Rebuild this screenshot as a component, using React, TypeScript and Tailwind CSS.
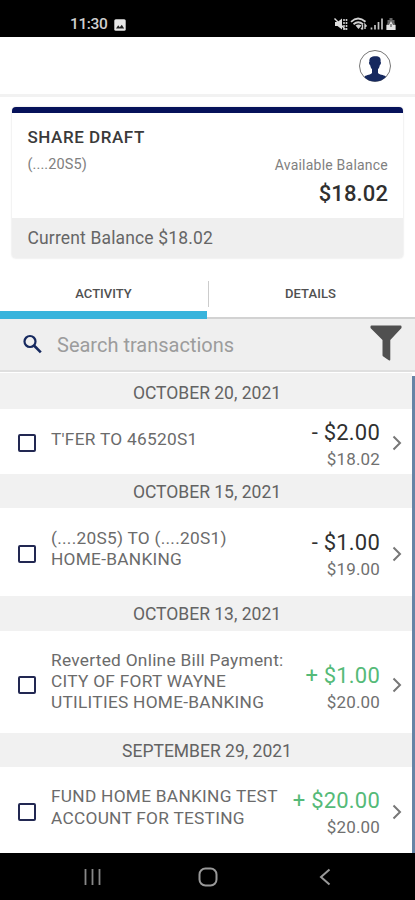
import React from "react";

interface Transaction {
  date: string;
  lines: string[];
  amount: string;
  balance: string;
  credit?: boolean;
  headerClass: string;
  rowClass: string;
  textClass: string;
  amountClass: string;
}

const transactions: Transaction[] = [
  {
    date: "OCTOBER 20, 2021",
    lines: ["T'FER TO 46520S1"],
    amount: "- $2.00",
    balance: "$18.02",
    headerClass: "h-9 pt-[5px]",
    rowClass: "h-[65px]",
    textClass: "pb-[3px]",
    amountClass: "pt-[10px]",
  },
  {
    date: "OCTOBER 15, 2021",
    lines: ["(....20S5) TO (....20S1)", "HOME-BANKING"],
    amount: "- $1.00",
    balance: "$19.00",
    headerClass: "h-[34px] pt-[2px]",
    rowClass: "h-[88px]",
    textClass: "pb-[6px]",
    amountClass: "pt-[8px]",
  },
  {
    date: "OCTOBER 13, 2021",
    lines: [
      "Reverted Online Bill Payment:",
      "CITY OF FORT WAYNE",
      "UTILITIES HOME-BANKING",
    ],
    amount: "+ $1.00",
    balance: "$20.00",
    credit: true,
    headerClass: "h-[35px] pt-[2px]",
    rowClass: "h-[102px] pt-[2px]",
    textClass: "pb-[3px]",
    amountClass: "pt-[12px]",
  },
  {
    date: "SEPTEMBER 29, 2021",
    lines: ["FUND HOME BANKING TEST", "ACCOUNT FOR TESTING"],
    amount: "+ $20.00",
    balance: "$20.00",
    credit: true,
    headerClass: "h-[34px] pt-[2px]",
    rowClass: "h-[86px]",
    textClass: "pb-[5px]",
    amountClass: "pt-[8px]",
  },
];

function StatusBar() {
  return (
    <div className="flex h-[37px] shrink-0 items-end justify-between bg-black pb-[5px] pl-[70px] pr-[18px] text-[#cfcfcf]">
      <div className="flex items-center gap-[7px]">
        <span className="text-[15.5px] font-medium leading-[15px] tracking-[-0.4px]">
          11:30
        </span>
        <svg width="12" height="12" viewBox="0 0 12 12">
          <rect x="0.3" y="0.3" width="11.4" height="11.4" rx="1.5" fill="#e8e8e8" />
          <path d="M2 9.5 4.2 6.3l1.6 2 2-2.6L10.2 9.5Z" fill="#222" />
        </svg>
      </div>
      <svg width="63" height="15" viewBox="0 0 63 15" fill="none">
        {/* muted, vibrate */}
        <path d="M1 5h2.5L8 1.5v11L3.5 9H1Z" fill="#dedede" />
        <path d="m.5 1.5 11 11" stroke="#dedede" strokeWidth="1.5" />
        <path
          d="M10 2v11M12.5 2v11"
          stroke="#c8c8c8"
          strokeWidth="1.6"
          strokeDasharray="2 1"
        />
        {/* wifi */}
        <path d="M17 4.8q7-6.5 14.5 0M19.5 7.2q4.7-4 9.5 0" stroke="#d0d0d0" strokeWidth="1.8" />
        <path d="M21.5 8.5q3-2 6 0L24.5 12Z" fill="#d0d0d0" />
        <path d="M28.5 7.5v5m-1.5-1.5 1.5 1.5M31 12V7.5L32.500 9.500" stroke="#d0d0d0" strokeWidth="1.4" />
        {/* signal */}
        <path d="M37.5 12.5v-2M41 12.5V8M44.5 12.5V5M48 12.5V1.5" stroke="#c4c4c4" strokeWidth="1.7" />
        {/* battery */}
        <path d="M55.5 1h3v2h2v3l1 2v5h-9V8l1-2V3h2Z" fill="#666" />
        <path d="M52.5 8H55l2-4 2 4h2.500v5h-9Z" fill="#e4e4e4" />
        <path d="M57 7v3" stroke="#444" />
      </svg>
    </div>
  );
}

function Header() {
  return (
    <div className="flex h-[60px] shrink-0 justify-end border-b-[3px] border-[#f2f2f2] bg-white pr-[23px] pt-[12px]">
      <svg width="34" height="34" viewBox="0 0 34 34">
        <defs>
          <clipPath id="avatar">
            <circle cx="17" cy="17" r="15.5" />
          </clipPath>
        </defs>
        <circle cx="17" cy="17" r="15.5" fill="#fff" stroke="#777" strokeWidth="1" />
        <path
          clipPath="url(#avatar)"
          d="M17.5 7.3c4 0 5.6 1.7 5.1 5.5.9.6.2 3-.8 3.4-.4 1.8-1 3.2-1.800 4v3.800c1 1.700 5.700 2 7.700 3.200V33h-21v-5.800c2-1.200 6.300-1.500 7.300-3.200v-3.800c-.8-.8-1.400-2.200-1.800-4-1-.4-1.700-2.800-.8-3.400-.5-3.800 2-5.500 6.100-5.500Z"
          fill="#16295f"
        />
      </svg>
    </div>
  );
}

function AccountCard() {
  return (
    <div className="mx-3 mt-[10px] flex h-[151px] shrink-0 flex-col overflow-hidden rounded-[4px] border-t-[6px] border-[#06125a] bg-white shadow-[0_0_2px_rgba(0,0,0,0.18)]">
      <div className="flex h-[105px] shrink-0 justify-between pl-[15.5px] pr-[15px]">
        <div className="pt-[14px]">
          <div className="text-[17px] font-medium leading-5 tracking-[0.55px] text-[#3a3a3a]">
            SHARE DRAFT
          </div>
          <div className="pt-[8px] text-[14.5px] leading-5 tracking-[0.1px] text-[#808080]">
            (....20S5)
          </div>
        </div>
        <div className="flex flex-col items-end pt-[42px]">
          <div className="text-[14px] leading-5 tracking-[0.22px] text-[#808080]">
            Available Balance
          </div>
          <div className="pt-[7px] text-[22px] font-medium leading-6 tracking-[0.1px] text-[#303030]">
            $18.02
          </div>
        </div>
      </div>
      <div className="flex flex-1 items-center bg-[#efefef] px-[15.5px] pt-px text-[17.5px] tracking-[0.15px] text-[#666]">
        Current Balance $18.02
      </div>
    </div>
  );
}

function Tabs() {
  return (
    <div className="mt-[7px] flex h-[54px] shrink-0 text-[13px] font-medium text-[#505050]">
      <div className="flex w-[207px] items-center justify-center border-b-8 border-[#38b4dc] pt-[11px]">
        ACTIVITY
      </div>
      <div className="flex flex-1 items-center border-b-2 border-[#d2d2d2]">
        <div className="ml-px mt-[6px] h-[26px] w-px shrink-0 bg-[#ccc]" />
        <div className="flex-1 pr-[3px] pt-[6px] text-center tracking-[0.1px]">DETAILS</div>
      </div>
    </div>
  );
}

function SearchBar() {
  return (
    <div className="flex h-[53px] shrink-0 items-center border-b-2 border-[#dfdfdf] bg-[#efefef] pl-[22px] pr-[13px]">
      <svg width="21" height="21" viewBox="0 0 21 21" fill="none" stroke="#16295f" strokeWidth="2.2">
        <circle cx="8" cy="7.5" r="5.5" />
        <path d="m12 11.5 6.800 6.800" strokeWidth="2.6" />
      </svg>
      <input
        className="min-w-0 flex-1 pl-[14px] text-[20px] text-[#555] outline-none placeholder:text-[#9c9c9c]"
        placeholder="Search transactions"
      />
      <svg className="-mt-[3px]" width="32" height="36" viewBox="0 0 32 36">
        <path
          d="M1.5.5h29q1 0 1 1v1.500L20.300 15v19.500q0 1.500-1.500.8l-5.500-3.800q-.8-.5-.8-1.500V15L.5 3V1.500q0-1 1-1Z"
          fill="#505050"
        />
      </svg>
    </div>
  );
}

function TransactionItem({ item }: { item: Transaction }) {
  return (
    <>
      <div
        className={`flex shrink-0 items-center justify-center bg-[#f1f1f1] pl-[2px] text-[17.5px] text-[#636363] ${item.headerClass}`}
      >
        {item.date}
      </div>
      <div className={`flex shrink-0 items-center bg-white pl-[18px] pr-[9px] ${item.rowClass}`}>
        <div className="mt-[3px] size-[18px] shrink-0 rounded-[2px] border-2 border-[#222852]" />
        <div
          className={`flex-1 whitespace-nowrap pl-[15px] text-[17.3px] leading-[21.3px] tracking-[0.27px] text-[#6b6b6b] ${item.textClass}`}
        >
          {item.lines.map((line) => (
            <div key={line}>{line}</div>
          ))}
        </div>
        <div className={`flex flex-col items-end ${item.amountClass}`}>
          <div
            className={`text-[22px] leading-[26px] tracking-[0.2px] ${item.credit ? "text-[#55ba78]" : "text-[#303030]"}`}
          >
            {item.amount}
          </div>
          <div className="text-[17px] leading-[27px] tracking-[0.15px] text-[#707070]">
            {item.balance}
          </div>
        </div>
        <svg className="ml-[12px] mt-[3px] shrink-0" width="11" height="16" viewBox="0 0 11 16" fill="none">
          <path d="m1.5 1.5 6.500 6.500-6.500 6.500" stroke="#777" strokeWidth="2" />
        </svg>
      </div>
    </>
  );
}

function NavBar() {
  return (
    <div className="flex h-[47px] shrink-0 items-center bg-black pl-[83px]">
      <svg width="20" height="20" viewBox="0 0 20 20" stroke="#888" strokeWidth="1.8">
        <path d="M2.5 2v16M9.5 2v16M16.5 2v16" />
      </svg>
      <svg className="ml-[95px]" width="20" height="20" viewBox="0 0 20 20" fill="none">
        <rect x="1.5" y="1.5" width="17" height="17" rx="6" stroke="#999" strokeWidth="2" />
      </svg>
      <svg className="ml-[101px]" width="12" height="18" viewBox="0 0 12 18" fill="none">
        <path d="M10.5 1.5 2 9l8.500 7.500" stroke="#999" strokeWidth="2" />
      </svg>
    </div>
  );
}

export default function App() {
  return (
    <div className="flex h-[900px] w-[415px] flex-col overflow-hidden bg-white font-['Roboto',sans-serif]">
      <StatusBar />
      <Header />
      <AccountCard />
      <Tabs />
      <SearchBar />
      <div className="flex flex-1 pt-[1px]">
        <div className="flex flex-1 flex-col">
          {transactions.map((item) => (
            <TransactionItem key={item.date} item={item} />
          ))}
        </div>
        <div className="mt-[3px] w-[3px] bg-[#6684a6]" />
      </div>
      <NavBar />
    </div>
  );
}
